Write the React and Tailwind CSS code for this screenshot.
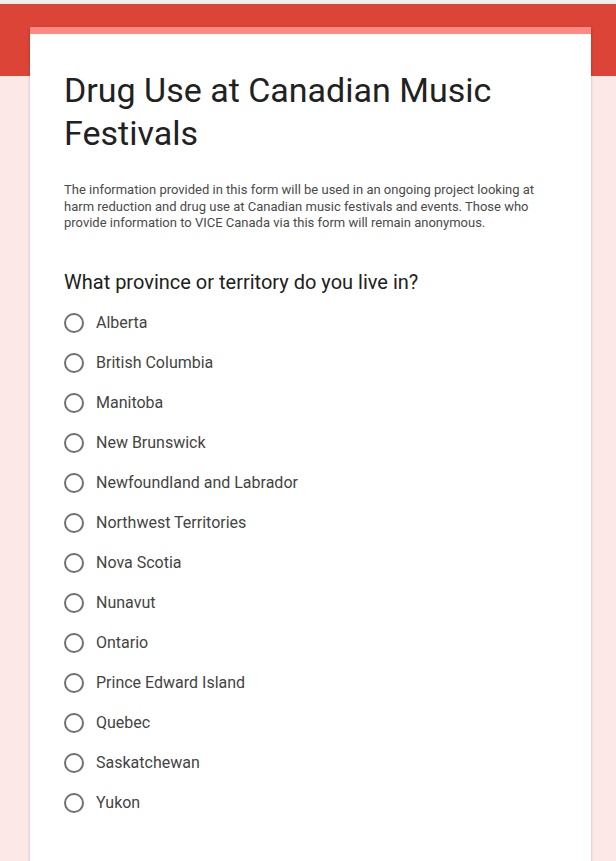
import React from 'react';

const provinces = [
  'Alberta',
  'British Columbia',
  'Manitoba',
  'New Brunswick',
  'Newfoundland and Labrador',
  'Northwest Territories',
  'Nova Scotia',
  'Nunavut',
  'Ontario',
  'Prince Edward Island',
  'Quebec',
  'Saskatchewan',
  'Yukon',
];

function RadioOption({ label }) {
  return (
    <label className="flex items-center h-10 cursor-pointer">
      <span className="w-5 h-5 rounded-full border-2 border-[#707070] shrink-0" />
      <span className="ml-3 text-[16px] text-[#444444]">{label}</span>
    </label>
  );
}

export default function App() {
  return (
    <div
      className="min-h-[861px] bg-[#fce8e6] relative overflow-hidden"
      style={{ fontFamily: 'Roboto, "Liberation Sans", sans-serif' }}
    >
      <div className="h-[4px] bg-[#eeeeee]" />
      <div className="h-[72px] bg-[#db4437]" />
      <div className="absolute left-[30px] right-[25px] top-[27px] bg-white shadow-[0_1px_3px_rgba(0,0,0,0.2)] min-h-[900px]">
        <div className="h-[7px] bg-[#ff8a80]" />
        <div className="pl-[34px] pr-[35px] pt-[35px]">
          <h1 className="text-[34px] leading-[43px] text-[#212121] font-normal">
            Drug Use at Canadian Music Festivals
          </h1>
          <p className="mt-[27px] text-[13px] leading-[16.5px] text-[#4a4a4a]">
            The information provided in this form will be used in an ongoing project looking at harm reduction and drug use at Canadian music festivals and events. Those who provide information to VICE Canada via this form will remain anonymous.
          </p>
          <div className="mt-[38px] text-[20px] leading-[24px] text-[#212121]">
            What province or territory do you live in?
          </div>
          <div className="mt-[9px] flex flex-col">
            {provinces.map((p) => (
              <RadioOption key={p} label={p} />
            ))}
          </div>
        </div>
      </div>
    </div>
  );
}
